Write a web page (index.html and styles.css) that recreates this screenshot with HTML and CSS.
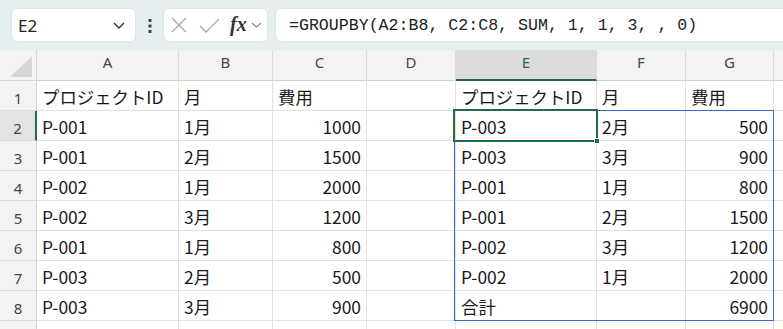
FILE: index.html
```html
<!DOCTYPE html>
<html lang="ja">
<head>
<meta charset="utf-8">
<link rel="stylesheet" href="styles.css">
</head>
<body>
<div class="toolbar">
  <div class="namebox">
    <span class="ref">E2</span>
    <svg class="chev" width="12" height="7" viewBox="0 0 12 7"><path d="M1 1 L6 6 L11 1" fill="none" stroke="#333" stroke-width="1.4"/></svg>
  </div>
  <div class="dots">
    <svg width="4" height="14" viewBox="0 0 4 14"><rect x="0.5" y="0" width="3" height="3" fill="#444"/><rect x="0.5" y="5.5" width="3" height="3" fill="#444"/><rect x="0.5" y="11" width="3" height="3" fill="#444"/></svg>
  </div>
  <div class="fxbox">
    <svg class="ico" width="16" height="16" viewBox="0 0 16 16"><path d="M1 1 L15 15 M15 1 L1 15" stroke="#a8a8a8" stroke-width="1.3" fill="none"/></svg>
    <svg class="ico chk" width="21" height="15" viewBox="0 0 21 15"><path d="M1 8 L7 14 L20 1" stroke="#a8a8a8" stroke-width="1.3" fill="none"/></svg>
    <span class="fx">fx</span>
    <svg class="chev small" width="11" height="6" viewBox="0 0 11 6"><path d="M1 1 L5.5 5 L10 1" fill="none" stroke="#888" stroke-width="1.2"/></svg>
  </div>
  <div class="formula">=GROUPBY(A2:B8, C2:C8, SUM, 1, 1, 3, , 0)</div>
</div>

<div class="sheet">
  <div class="grid">
    <div class="corner"><svg width="22" height="21" viewBox="0 0 22 21"><path d="M22 0 L22 21 L0 21 Z" fill="#d6d6d6"/></svg></div>
    <div class="ch">A</div><div class="ch">B</div><div class="ch">C</div><div class="ch">D</div><div class="ch sel">E</div><div class="ch">F</div><div class="ch">G</div><div class="ch last"></div>

    <div class="rh">1</div><div class="c">プロジェクトID</div><div class="c">月</div><div class="c">費用</div><div class="c"></div><div class="c">プロジェクトID</div><div class="c">月</div><div class="c">費用</div><div class="c last"></div>

    <div class="rh sel">2</div><div class="c">P-001</div><div class="c">1月</div><div class="c n">1000</div><div class="c"></div><div class="c">P-003</div><div class="c">2月</div><div class="c n">500</div><div class="c last"></div>

    <div class="rh">3</div><div class="c">P-001</div><div class="c">2月</div><div class="c n">1500</div><div class="c"></div><div class="c">P-003</div><div class="c">3月</div><div class="c n">900</div><div class="c last"></div>

    <div class="rh">4</div><div class="c">P-002</div><div class="c">1月</div><div class="c n">2000</div><div class="c"></div><div class="c">P-001</div><div class="c">1月</div><div class="c n">800</div><div class="c last"></div>

    <div class="rh">5</div><div class="c">P-002</div><div class="c">3月</div><div class="c n">1200</div><div class="c"></div><div class="c">P-001</div><div class="c">2月</div><div class="c n">1500</div><div class="c last"></div>

    <div class="rh">6</div><div class="c">P-001</div><div class="c">1月</div><div class="c n">800</div><div class="c"></div><div class="c">P-002</div><div class="c">3月</div><div class="c n">1200</div><div class="c last"></div>

    <div class="rh">7</div><div class="c">P-003</div><div class="c">2月</div><div class="c n">500</div><div class="c"></div><div class="c">P-002</div><div class="c">1月</div><div class="c n">2000</div><div class="c last"></div>

    <div class="rh">8</div><div class="c">P-003</div><div class="c">3月</div><div class="c n">900</div><div class="c"></div><div class="c">合計</div><div class="c"></div><div class="c n">6900</div><div class="c last"></div>

    <div class="rh"></div><div class="c"></div><div class="c"></div><div class="c"></div><div class="c"></div><div class="c"></div><div class="c"></div><div class="c"></div><div class="c last"></div>
  </div>
  <div class="range"></div>
  <div class="active"></div>
  <div class="handle"></div>
</div>
</body>
</html>
```

FILE: styles.css
```css
* { box-sizing: border-box; }
html, body { margin: 0; padding: 0; background: #fff; overflow: hidden; }
body { width: 783px; height: 329px; font-family: "Noto Sans CJK JP", "Noto Sans", sans-serif; }

.toolbar {
  height: 50px;
  background: #e6eff0;
  display: flex;
  align-items: flex-start;
  padding-top: 8px;
  padding-left: 11px;
  white-space: nowrap;
}
.namebox {
  width: 125px;
  height: 34px;
  background: #fff;
  border-radius: 6px;
  border: 1px solid #dfe6e7;
  display: flex;
  align-items: center;
  justify-content: space-between;
  padding: 0 10px 0 6px;
}
.ref { font-family: "Noto Sans", sans-serif; font-size: 17px; color: #222; }
.chev { display: block; }
.dots { width: 27px; display: flex; justify-content: center; padding-top: 11px; }
.dots svg { display: block; }
.fxbox {
  width: 105px;
  height: 34px;
  background: #fff;
  border-radius: 6px;
  border: 1px solid #dfe6e7;
  display: flex;
  align-items: center;
  padding-left: 7px;
}
.ico { display: block; }
.chk { margin-left: 12px; }
.fx {
  font-family: "Liberation Serif", "DejaVu Serif", serif;
  font-style: italic;
  font-weight: bold;
  font-size: 20px;
  color: #333;
  margin-left: 10px;
  line-height: 1;
  padding-bottom: 2px;
}
.small { margin-left: 4px; }
.formula {
  flex: 1;
  margin-left: 7px;
  height: 34px;
  background: #fff;
  border-radius: 6px 0 0 6px;
  border: 1px solid #dfe6e7;
  border-right: none;
  font-family: "Liberation Mono", monospace;
  font-size: 16.6px;
  color: #222;
  display: flex;
  align-items: center;
  padding-left: 13px;
}

.sheet { position: relative; }
.grid {
  display: grid;
  grid-template-columns: 37px 142px 94px 94px 89px 141px 89px 88px 40px;
  grid-template-rows: 31px repeat(9, 30px);
}
.corner {
  background: #f3f3f3;
  border-right: 1px solid #d8d8d8;
  border-bottom: 1px solid #d8d8d8;
  display: flex;
  align-items: flex-end;
  justify-content: flex-end;
  padding: 0 4px 3px 0;
}
.corner svg { display: block; }
.ch {
  background: #f3f3f3;
  border-right: 1px solid #dadada;
  border-bottom: 1px solid #d0d0d0;
  font-family: "Noto Sans", sans-serif;
  font-size: 15px;
  color: #444;
  display: flex;
  align-items: center;
  justify-content: center;
  padding-bottom: 6px;
}
.ch.sel {
  background: #dcdcdc;
  color: #1f6e43;
  border-bottom: 2px solid #1f6e43;
}
.ch.last { border-right: none; }
.rh {
  background: #f3f3f3;
  border-right: 1px solid #d0d0d0;
  border-bottom: 1px solid #dadada;
  font-family: "Noto Sans", sans-serif;
  font-size: 15px;
  color: #444;
  display: flex;
  align-items: center;
  justify-content: center;
  padding-top: 4px;
}
.rh.sel { background: #e3e3e3; border-right: 2px solid #1f6e43; }
.c {
  border-right: 1px solid #e1e1e1;
  border-bottom: 1px solid #e1e1e1;
  font-size: 17.4px;
  color: #1a1a1a;
  display: flex;
  align-items: center;
  padding: 1px 5px 0 5px;
  white-space: nowrap;
  overflow: hidden;
}
.c.n { justify-content: flex-end; }
.c.last { border-right: none; }

.range {
  position: absolute;
  left: 454px;
  top: 60px;
  width: 320px;
  height: 211px;
  border: 1px solid #3b6bc9;
  pointer-events: none;
}
.active {
  position: absolute;
  left: 453px;
  top: 59px;
  width: 145px;
  height: 33px;
  border: 2px solid #1f6e43;
}
.handle {
  position: absolute;
  left: 594px;
  top: 88px;
  width: 6px;
  height: 6px;
  background: #1f6e43;
  border: 1px solid #fff;
}
```
